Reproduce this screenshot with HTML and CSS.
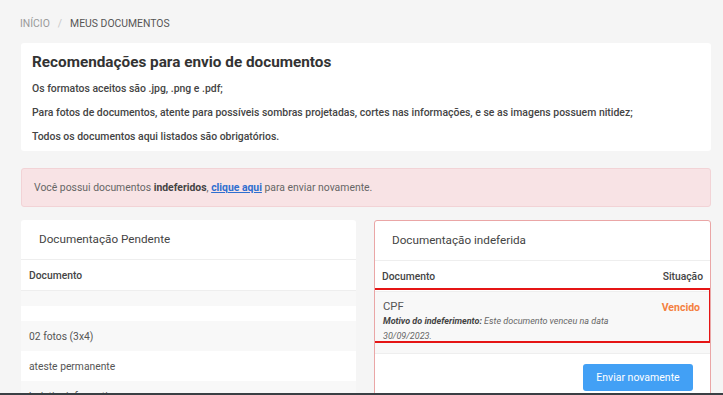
FILE: index.html
```html
<!DOCTYPE html>
<html lang="pt-BR">
<head>
    <meta charset="UTF-8">
    <meta name="viewport" content="width=device-width, initial-scale=1.0">
    <title>Meus Documentos</title>
    <link rel="stylesheet" href="styles.css">
</head>
<body>

  <nav class="breadcrumb">
    <span class="crumb">Início</span>
    <span class="sep">/</span>
    <span class="crumb atual">Meus documentos</span>
  </nav>

  <section class="card recomendacoes">
    <h1>Recomendações para envio de documentos</h1>
    <p>Os formatos aceitos são .jpg, .png e .pdf;</p>
    <p>Para fotos de documentos, atente para possíveis sombras projetadas, cortes nas informações, e se as imagens possuem nitidez;</p>
    <p>Todos os documentos aqui listados são obrigatórios.</p>
  </section>

  <div class="alerta">
    Você possui documentos <b>indeferidos</b>, <a href="#">clique aqui</a> para enviar novamente.
  </div>

  <div class="colunas">
    <section class="card painel">
      <h2>Documentação Pendente</h2>
      <table>
        <thead>
          <tr><th>Documento</th></tr>
        </thead>
        <tbody>
          <tr class="vazio"><td></td></tr>
          <tr class="vazio"><td></td></tr>
          <tr><td>02 fotos (3x4)</td></tr>
          <tr><td>ateste permanente</td></tr>
          <tr><td>boletim informativo</td></tr>
        </tbody>
      </table>
    </section>

    <section class="card painel indeferida">
      <h2>Documentação indeferida</h2>
      <table>
        <thead>
          <tr><th>Documento</th><th class="dir">Situação</th></tr>
        </thead>
        <tbody>
          <tr>
            <td>
              <div class="doc">CPF</div>
              <div class="motivo"><b>Motivo do indeferimento:</b> Este documento venceu na data 30/09/2023.</div>
            </td>
            <td class="dir"><span class="vencido">Vencido</span></td>
          </tr>
        </tbody>
      </table>
      <div class="destaque"></div>
      <div class="acoes">
        <button>Enviar novamente</button>
      </div>
    </section>
  </div>

  <div class="barra"></div>

</body>
</html>
```

FILE: styles.css
```css
/* Estilo geral */
body {
    font-family: Roboto, "Liberation Sans", sans-serif;
    margin: 0;
    padding: 0 12px 0 21px;
    background-color: #f5f5f5;
    color: #444;
    overflow: hidden;
    height: 395px;
}

/* Breadcrumb */
.breadcrumb {
    height: 39px;
    padding-top: 4px;
    display: flex;
    align-items: center;
    gap: 8px;
    font-size: 10.4px;
    text-transform: uppercase;
    margin-left: -1px;
}

.crumb {
    color: #9a9a9a;
}

.crumb.atual {
    color: #555;
}

.sep {
    color: #c8c8c8;
}

.card {
    background: #fff;
    border-radius: 3px;
}

/* Recomendações */
.recomendacoes {
    width: 690px;
    box-sizing: border-box;
    padding: 10px 11px 10px;
    height: 108px;
}

.recomendacoes h1 {
    margin: 0 0 11px;
    font-size: 15.3px;
    font-weight: bold;
    color: #333;
}

.recomendacoes p {
    margin: 0 0 10px;
    line-height: 14px;
    font-size: 10.45px;
    font-weight: 500;
    color: #444;
}

/* Alerta */
.alerta {
    width: 690px;
    box-sizing: border-box;
    margin-top: 17px;
    height: 39px;
    line-height: 37px;
    padding: 0 12px;
    background: #f8e3e5;
    border: 1px solid #f2d3d6;
    border-radius: 3px;
    font-size: 10.4px;
    color: #666;
}

.alerta b {
    color: #444;
}

.alerta a {
    color: #2f6fd0;
    font-weight: bold;
}

/* Colunas */
.colunas {
    display: flex;
    gap: 18px;
    margin-top: 13px;
    width: 690px;
}

.painel {
    flex: 1;
    position: relative;
    height: 190px;
    overflow: hidden;
}

.painel h2 {
    margin: 0;
    height: 39px;
    line-height: 39px;
    padding-left: 18px;
    font-size: 11.7px;
    font-weight: normal;
    color: #444;
    border-bottom: 1px solid #eee;
}

table {
    width: 100%;
    border-collapse: collapse;
}

th, td {
    text-align: left;
    padding: 0 8px;
    font-size: 10.3px;
}

th {
    height: 30px;
    font-weight: 500;
    color: #444;
    border-bottom: 1px solid #eee;
}

td {
    height: 30px;
    color: #555;
}

tbody tr:nth-child(odd) {
    background: #f8f8f8;
}

tr.vazio td {
    height: 15px;
}

.dir {
    text-align: right;
}

/* Indeferida */
.indeferida {
    border: 1px solid #eaa6a6;
    box-sizing: border-box;
}

.indeferida h2 {
    padding-left: 17px;
}

.indeferida th {
    padding: 0 7px;
}

.indeferida tbody td {
    vertical-align: top;
    height: 62px;
    padding-top: 8px;
    box-sizing: border-box;
    border-bottom: 1px solid #eee;
}

.doc {
    font-size: 11.3px;
    color: #555;
    margin-bottom: 1px;
}

.motivo {
    width: 232px;
    font-size: 9px;
    font-style: italic;
    line-height: 15px;
    color: #666;
}

.motivo b {
    color: #444;
}

.vencido {
    color: #f4803f;
    font-weight: bold;
    font-size: 10.5px;
    margin-right: 2px;
    line-height: 16px;
}

.destaque {
    position: absolute;
    left: -3px;
    top: 67px;
    width: 339px;
    height: 55px;
    box-sizing: border-box;
    border: 2px solid #e51515;
}

.acoes {
    display: flex;
    justify-content: flex-end;
    padding: 10px 17px 0 0;
}

button {
    width: 110px;
    height: 27px;
    background-color: #42a0f5;
    color: #fff;
    border: none;
    border-radius: 3px;
    font-family: inherit;
    font-size: 10.5px;
}

.barra {
    position: fixed;
    left: 0;
    right: 0;
    bottom: 0;
    height: 2px;
    background: #3a3f44;
}
```
